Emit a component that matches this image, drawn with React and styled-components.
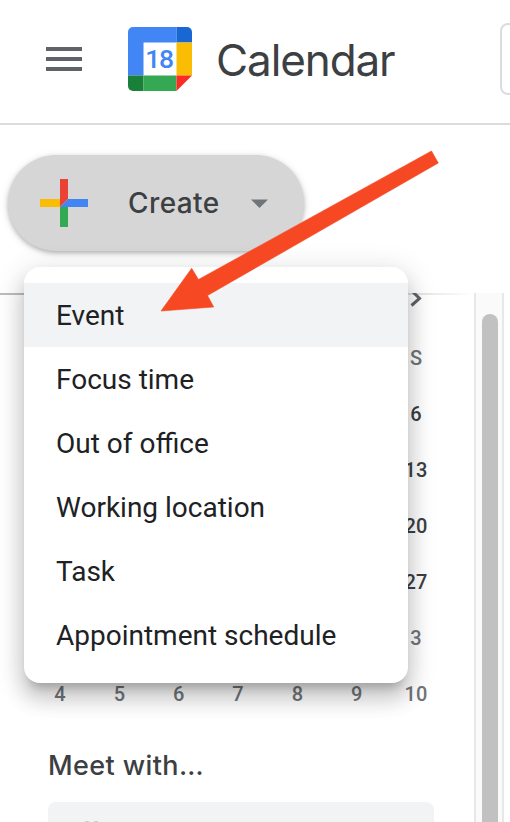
import React from "react";
import styled, { createGlobalStyle } from "styled-components";

const GlobalStyle = createGlobalStyle`
  * { box-sizing: border-box; }
  body { margin: 0; background: #fff; overflow: hidden; }
`;

const Page = styled.div`
  position: relative;
  display: flex;
  flex-direction: column;
  width: 510px;
  height: 822px;
  overflow: hidden;
  background: #fff;
  font-family: Roboto, sans-serif;
`;

const Header = styled.header`
  display: flex;
  align-items: flex-start;
  flex: none;
  height: 125px;
  border-bottom: 2px solid #dadce0;
`;

const MenuButton = styled.button`
  display: flex;
  flex: none;
  flex-direction: column;
  gap: 6px;
  width: 36px;
  margin: 47px 0 0 46px;
  padding: 0;
  border: 0;
  background: none;
`;

const MenuLine = styled.span`
  width: 36px;
  height: 4px;
  background: #5f6368;
`;

const Logo = styled.svg`
  flex: none;
  width: 64px;
  height: 64px;
  margin: 27px 0 0 46px;
`;

const LogoDate = styled.text`
  font: 500 26.5px Roboto, sans-serif;
  letter-spacing: -1.2px;
  fill: #4285f4;
`;

const AppName = styled.h1`
  flex: none;
  width: 283px;
  margin: 32px 0 0 24px;
  color: #3c4043;
  font: 400 44px/56px Inter, sans-serif;
  letter-spacing: -1.1px;
`;

const HeaderControl = styled.div`
  flex: none;
  width: 80px;
  height: 72px;
  margin: 23px 0 0 1px;
  border: 2px solid #dadce0;
  border-radius: 8px;
`;

const CreateArea = styled.div`
  flex: none;
  height: 168px;
  padding: 30px 0 0 8px;
`;

const CreateButton = styled.button`
  display: flex;
  align-items: center;
  width: 296px;
  height: 96px;
  padding: 0 0 0 32px;
  border: 0;
  border-radius: 48px;
  background: #d6d6d6;
  box-shadow: 0 2px 4px rgba(60, 64, 67, 0.3), 0 2px 8px rgba(60, 64, 67, 0.15);
`;

const PlusIcon = styled.svg`
  width: 48px;
  height: 48px;
`;

const CreateLabel = styled.span`
  width: 123px;
  margin-left: 40px;
  color: #3c4043;
  text-align: left;
  font: 500 28px/40px Inter, sans-serif;
  letter-spacing: 0.4px;
`;

const Caret = styled.svg`
  width: 17px;
  height: 9px;
`;

const Sidebar = styled.div`
  display: flex;
  flex: 1;
  min-height: 0;
  overflow: hidden;
`;

const SidebarContent = styled.div`
  flex: none;
  width: 474px;
  background: linear-gradient(90deg, #bdbdbd 0 24px, #dedede 408px, #fff 474px) 0 0 / 474px 2px no-repeat;
`;

const MonthNav = styled.div`
  display: flex;
  justify-content: flex-end;
  height: 37px;
  padding-right: 51px;
`;

const Chevron = styled.svg`
  width: 14px;
  height: 16px;
`;

const MonthGrid = styled.div`
  display: grid;
  grid-template-columns: repeat(7, 59.33px);
  grid-auto-rows: 56px;
  width: 416px;
  margin-left: 30.5px;
`;

const Day = styled.span`
  grid-column: ${(p) => p.$column};
  display: flex;
  align-items: center;
  justify-content: center;
  color: ${(p) => (p.$muted ? "#70757a" : "#3c4043")};
  font-size: 20px;
  font-weight: 500;
  letter-spacing: 0.3px;
`;

const SectionTitle = styled.h2`
  height: 56px;
  margin: 24px 0 0 48px;
  color: #3c4043;
  font: 500 27px/40px Inter, sans-serif;
  letter-spacing: 0.4px;
`;

const PeopleField = styled.div`
  width: 386px;
  height: 64px;
  margin-left: 48px;
  padding: 18px 0 0 34px;
  border-radius: 8px;
  background: #f1f3f4;
`;

const PeopleIcon = styled.svg`
  display: block;
  width: 24px;
  height: 24px;
`;

const ScrollTrack = styled.div`
  flex: none;
  width: 30px;
  padding: 21px 4px 0 6px;
  border: solid #e8e8e8;
  border-width: 0 2px;
  background: #fafafa;
`;

const ScrollThumb = styled.div`
  width: 16px;
  height: 620px;
  border-radius: 8px;
  background: #c1c1c1;
`;

const CreateMenu = styled.ul`
  position: absolute;
  top: 267px;
  left: 24px;
  width: 384px;
  margin: 0;
  padding: 16px 0;
  border-radius: 16px;
  background: #fff;
  list-style: none;
  box-shadow:
    0 10px 10px -6px rgba(0, 0, 0, 0.2),
    0 16px 20px 2px rgba(0, 0, 0, 0.14),
    0 6px 28px 4px rgba(0, 0, 0, 0.12);
`;

const MenuItem = styled.li`
  height: 64px;
  padding-left: 32px;
  background: ${(p) => (p.$active ? "#f1f3f4" : "transparent")};
  color: #202124;
  font-size: 28px;
  line-height: 66px;
`;

const Pointer = styled.svg`
  position: absolute;
  top: 150px;
  left: 160px;
  width: 280px;
  height: 164px;
`;

const MENU = ["Event", "Focus time", "Out of office", "Working location", "Task", "Appointment schedule"];

const LAST_COLUMN = [
  { label: "S", muted: true },
  { label: "6" },
  { label: "13" },
  { label: "20" },
  { label: "27" },
  { label: "3", muted: true },
];

const LAST_WEEK = ["4", "5", "6", "7", "8", "9", "10"];

export default function App() {
  return (
    <Page>
      <GlobalStyle />
      <Header>
        <MenuButton aria-label="Main menu">
          <MenuLine />
          <MenuLine />
          <MenuLine />
        </MenuButton>
        <Logo viewBox="0 0 64 64">
          <path d="M5 0H48.5V15.5H15.5V48.5H0V5a5 5 0 0 1 5-5Z" fill="#4285f4" />
          <path d="M48.5 0H59a5 5 0 0 1 5 5V15.5H48.5Z" fill="#1967d2" />
          <path d="M48.5 15.5H64V48.5H48.5Z" fill="#fbbc04" />
          <path d="M0 48.5H15.5V64H5a5 5 0 0 1-5-5Z" fill="#188038" />
          <path d="M15.5 48.5H48.5V64H15.5Z" fill="#34a853" />
          <path d="M48.5 48.5H64L48.5 64Z" fill="#fc2c25" />
          <LogoDate x="31" y="41" textAnchor="middle">18</LogoDate>
        </Logo>
        <AppName>Calendar</AppName>
        <HeaderControl />
      </Header>
      <CreateArea>
        <CreateButton>
          <PlusIcon viewBox="0 0 48 48">
            <path d="M20 0h8v20l-8 8Z" fill="#ea4335" />
            <path d="M0 20h20v8H0Z" fill="#fbbc04" />
            <path d="M20 28h8v20h-8Z" fill="#34a853" />
            <path d="M28 20h20v8H20Z" fill="#4285f4" />
          </PlusIcon>
          <CreateLabel>Create</CreateLabel>
          <Caret viewBox="0 0 17 9">
            <path d="M0 0.5H17L8.5 9Z" fill="#70757a" />
          </Caret>
        </CreateButton>
      </CreateArea>
      <Sidebar>
        <SidebarContent>
          <MonthNav>
            <Chevron viewBox="0 0 14 16">
              <path d="M2.5-2.5 10.5 5.5 2.5 12.5" fill="none" stroke="#5f6368" strokeWidth="3" />
            </Chevron>
          </MonthNav>
          <MonthGrid>
            {LAST_COLUMN.map((d) => (
              <Day key={d.label} $column={7} $muted={d.muted}>{d.label}</Day>
            ))}
            {LAST_WEEK.map((d, i) => (
              <Day key={d} $column={i + 1} $muted>{d}</Day>
            ))}
          </MonthGrid>
          <SectionTitle>Meet with…</SectionTitle>
          <PeopleField>
            <PeopleIcon viewBox="0 0 24 24" fill="#b4b8bb">
              <circle cx="5" cy="6.2" r="5" />
              <circle cx="14" cy="6.2" r="5" />
            </PeopleIcon>
          </PeopleField>
        </SidebarContent>
        <ScrollTrack>
          <ScrollThumb />
        </ScrollTrack>
      </Sidebar>
      <CreateMenu>
        {MENU.map((label, i) => (
          <MenuItem key={label} $active={i === 0}>{label}</MenuItem>
        ))}
      </CreateMenu>
      <Pointer viewBox="160 150 280 164">
        <path d="M431.5 151 438.3 163 207.5 295.5 213.7 307 161 311 191.7 268.3 198.5 279.5Z" fill="#f64823" stroke="#f64823" strokeWidth="0.6" strokeLinejoin="round" />
      </Pointer>
    </Page>
  );
}
